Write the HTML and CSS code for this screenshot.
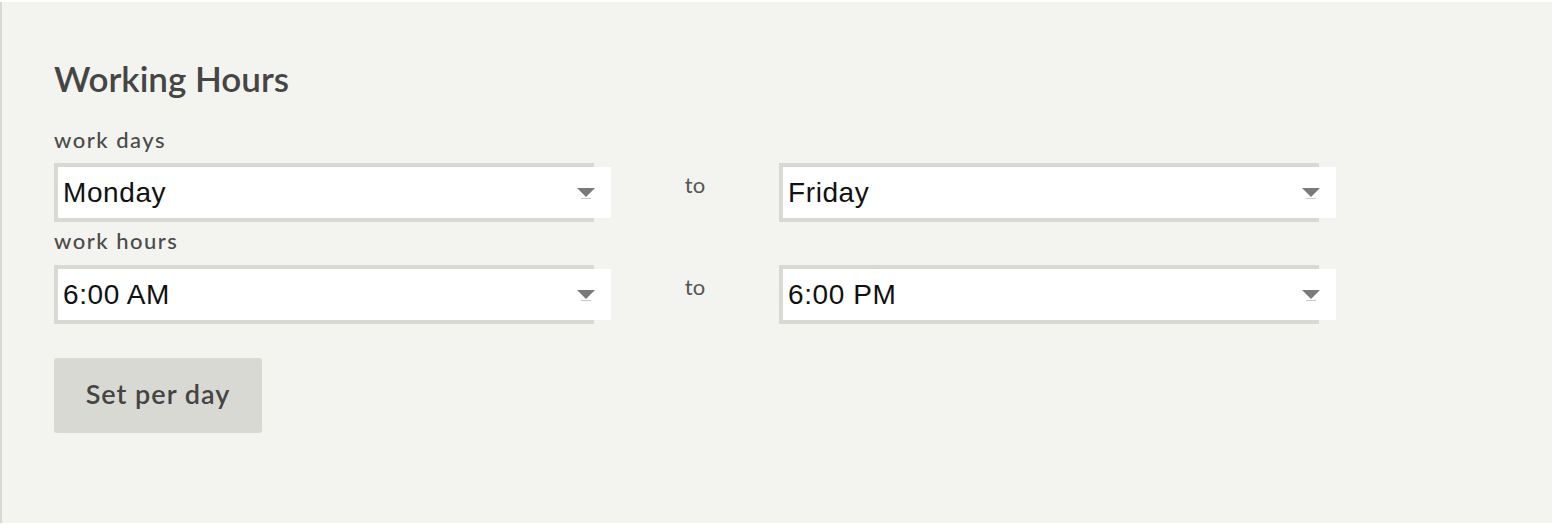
FILE: index.html
```html
<!DOCTYPE html>
<html lang="en">
<head>
    <meta charset="UTF-8">
    <meta name="viewport" content="width=device-width, initial-scale=1.0">
    <title>Working Hours</title>
    <link rel="stylesheet" href="styles.css">
</head>
<body>
    <div class="panel">
        <h2 class="title">Working Hours</h2>

        <div class="field-label">work days</div>
        <div class="range-row">
            <div class="select">
                <div class="select-face">
                    <span>Monday</span>
                    <svg class="arrow" width="18" height="11" viewBox="0 0 18 11"><polygon points="0,0 18,0 9,9" fill="#7a7a7a"/><rect x="4" y="10" width="10" height="1" fill="#c8c8c8"/></svg>
                </div>
            </div>
            <div class="to">to</div>
            <div class="select">
                <div class="select-face">
                    <span>Friday</span>
                    <svg class="arrow" width="18" height="11" viewBox="0 0 18 11"><polygon points="0,0 18,0 9,9" fill="#7a7a7a"/><rect x="4" y="10" width="10" height="1" fill="#c8c8c8"/></svg>
                </div>
            </div>
        </div>

        <div class="field-label second">work hours</div>
        <div class="range-row">
            <div class="select">
                <div class="select-face">
                    <span>6:00 AM</span>
                    <svg class="arrow" width="18" height="11" viewBox="0 0 18 11"><polygon points="0,0 18,0 9,9" fill="#7a7a7a"/><rect x="4" y="10" width="10" height="1" fill="#c8c8c8"/></svg>
                </div>
            </div>
            <div class="to">to</div>
            <div class="select">
                <div class="select-face">
                    <span>6:00 PM</span>
                    <svg class="arrow" width="18" height="11" viewBox="0 0 18 11"><polygon points="0,0 18,0 9,9" fill="#7a7a7a"/><rect x="4" y="10" width="10" height="1" fill="#c8c8c8"/></svg>
                </div>
            </div>
        </div>

        <button class="btn">Set per day</button>
    </div>
</body>
</html>
```

FILE: styles.css
```css
body {
    margin: 0;
    padding: 0;
    background: #fff;
    font-family: 'Lato', 'Open Sans', sans-serif;
}

.panel {
    margin-top: 2px;
    height: 521px;
    box-sizing: border-box;
    background: #f3f3ef;
    border-left: 2px solid #d9d9d3;
    padding: 55px 0 0 52px;
}

.title {
    margin: 0 0 29px 0;
    font-size: 35px;
    line-height: 42px;
    font-weight: 600;
    color: #454545;
}

.field-label {
    font-size: 22px;
    line-height: 24px;
    font-weight: 500;
    letter-spacing: 1.5px;
    color: #4a4a4a;
    margin-bottom: 11px;
}
.field-label.second {
    margin-top: 7px;
    margin-bottom: 12px;
}

.range-row {
    display: grid;
    grid-template-columns: 557px 168px 557px;
    align-items: start;
}

.select {
    width: 540px;
    box-sizing: border-box;
    border: 4px solid #d9d9d3;
    border-right: none;
}
.select-face {
    margin-right: -17px;
    height: 51px;
    background: #fff;
    display: flex;
    align-items: center;
    justify-content: space-between;
    padding: 0 16px 0 5px;
    font-family: 'Liberation Sans', Arial, sans-serif;
    font-size: 28px;
    letter-spacing: 0.6px;
    color: #111;
}
.arrow {
    margin-top: 2px;
}

.to {
    text-align: center;
    font-size: 22px;
    line-height: 26px;
    color: #555;
    padding-top: 9px;
}

.btn {
    margin-top: 34px;
    width: 208px;
    height: 75px;
    border: none;
    border-radius: 3px;
    background: #d9d9d4;
    color: #444;
    font-family: 'Lato', 'Open Sans', sans-serif;
    font-size: 27px;
    font-weight: 600;
    letter-spacing: 1px;
    padding: 0 0 4px 0;
    cursor: pointer;
}
```
